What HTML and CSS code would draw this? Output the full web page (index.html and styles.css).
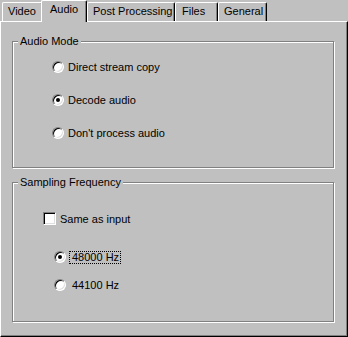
FILE: index.html
```html
<!DOCTYPE html>
<html lang="en">
<head>
  <meta charset="UTF-8" />
  <title>Audio</title>
  <link rel="stylesheet" href="styles.css">
</head>
<body>
  <div class="dialog">
    <div class="tabs">
      <div class="tab tab-video">Video</div>
      <div class="tab tab-audio active">Audio</div>
      <div class="tab tab-post">Post Processing</div>
      <div class="tab tab-files">Files</div>
      <div class="tab tab-general">General</div>
    </div>

    <div class="panel">
      <div class="group group-mode">
        <span class="group-title">Audio Mode</span>
        <label class="option opt-first"><span class="radio"></span>Direct stream copy</label>
        <label class="option"><span class="radio checked"></span>Decode audio</label>
        <label class="option"><span class="radio"></span>Don't process audio</label>
      </div>

      <div class="group group-freq">
        <span class="group-title">Sampling Frequency</span>
        <label class="option opt-same"><span class="check"></span>Same as input</label>
        <label class="option opt-48"><span class="radio checked"></span><span class="focus">48000 Hz</span></label>
        <label class="option opt-44"><span class="radio"></span>44100 Hz</label>
      </div>
    </div>
  </div>
</body>
</html>
```

FILE: styles.css
```css
body {
  margin: 0;
  background: #c0c0c0;
  font-family: "Liberation Sans", Arial, sans-serif;
  font-size: 11px;
  color: #000;
}
.dialog {
  width: 348px;
  height: 337px;
}
.tabs {
  display: flex;
  align-items: flex-end;
  height: 21px;
  padding-left: 2px;
  box-sizing: border-box;
  position: relative;
  z-index: 1;
}
.tab {
  height: 19px;
  box-sizing: border-box;
  border-top: 1px solid #fff;
  border-left: 1px solid #fff;
  border-right: 1px solid #000;
  border-radius: 2px 2px 0 0;
  box-shadow: inset -1px 0 0 #808080;
  padding-left: 5px;
  line-height: 17px;
  white-space: nowrap;
}
.tab-video { width: 41px; }
.tab-audio { width: 44px; }
.tab-post { width: 88px; }
.tab-files { width: 43px; padding-left: 6px; }
.tab-general { width: 49px; }
.tab.active {
  height: 22px;
  width: 46px;
  margin-left: -2px;
  margin-bottom: -1px;
  padding-left: 8px;
  background: #c0c0c0;
}
.panel {
  height: 316px;
  box-sizing: border-box;
  border-top: 1px solid #fff;
  border-left: 1px solid #fff;
  border-right: 1px solid #000;
  border-bottom: 1px solid #000;
  box-shadow: inset -1px -1px 0 #808080;
  padding: 19px 0 0 11px;
}
.group {
  position: relative;
  width: 322px;
  box-sizing: border-box;
  border: 1px solid #808080;
  box-shadow: inset 1px 1px 0 #fff, 1px 1px 0 #fff;
  display: flex;
  flex-direction: column;
  align-items: flex-start;
}
.group-mode {
  height: 127px;
  padding-left: 39px;
}
.group-freq {
  height: 140px;
  margin-top: 14px;
  padding-left: 30px;
}
.group-title {
  position: absolute;
  top: -7px;
  left: 5px;
  padding: 0 2px;
  line-height: 13px;
  background: #c0c0c0;
}
.option {
  display: flex;
  align-items: center;
  height: 12px;
  margin-top: 21px;
  white-space: nowrap;
}
.opt-first { margin-top: 19px; }
.opt-same { margin-top: 29px; height: 13px; }
.opt-48 { margin-top: 26px; margin-left: 11px; }
.opt-44 { margin-top: 16px; margin-left: 11px; }
.radio {
  width: 12px;
  height: 12px;
  box-sizing: border-box;
  border-radius: 50%;
  background: #fff;
  border: 1px solid;
  border-color: #808080 #fff #fff #808080;
  box-shadow: inset 1px 1px 0 #000, inset -1px -1px 0 #dfdfdf;
  margin-right: 4px;
  display: flex;
  align-items: center;
  justify-content: center;
  flex: none;
}
.radio.checked::after {
  content: "";
  width: 4px;
  height: 4px;
  border-radius: 50%;
  background: #000;
}
.opt-48 .radio { margin-right: 4px; }
.opt-44 .radio { margin-right: 6px; }
.check {
  width: 13px;
  height: 13px;
  box-sizing: border-box;
  background: #fff;
  border: 1px solid;
  border-color: #808080 #fff #fff #808080;
  box-shadow: inset 1px 1px 0 #000, inset -1px -1px 0 #dfdfdf;
  margin-right: 4px;
  flex: none;
}
.focus {
  padding: 0 1px 0 2px;
  line-height: 11px;
  outline: 1px dotted #000;
}
```
